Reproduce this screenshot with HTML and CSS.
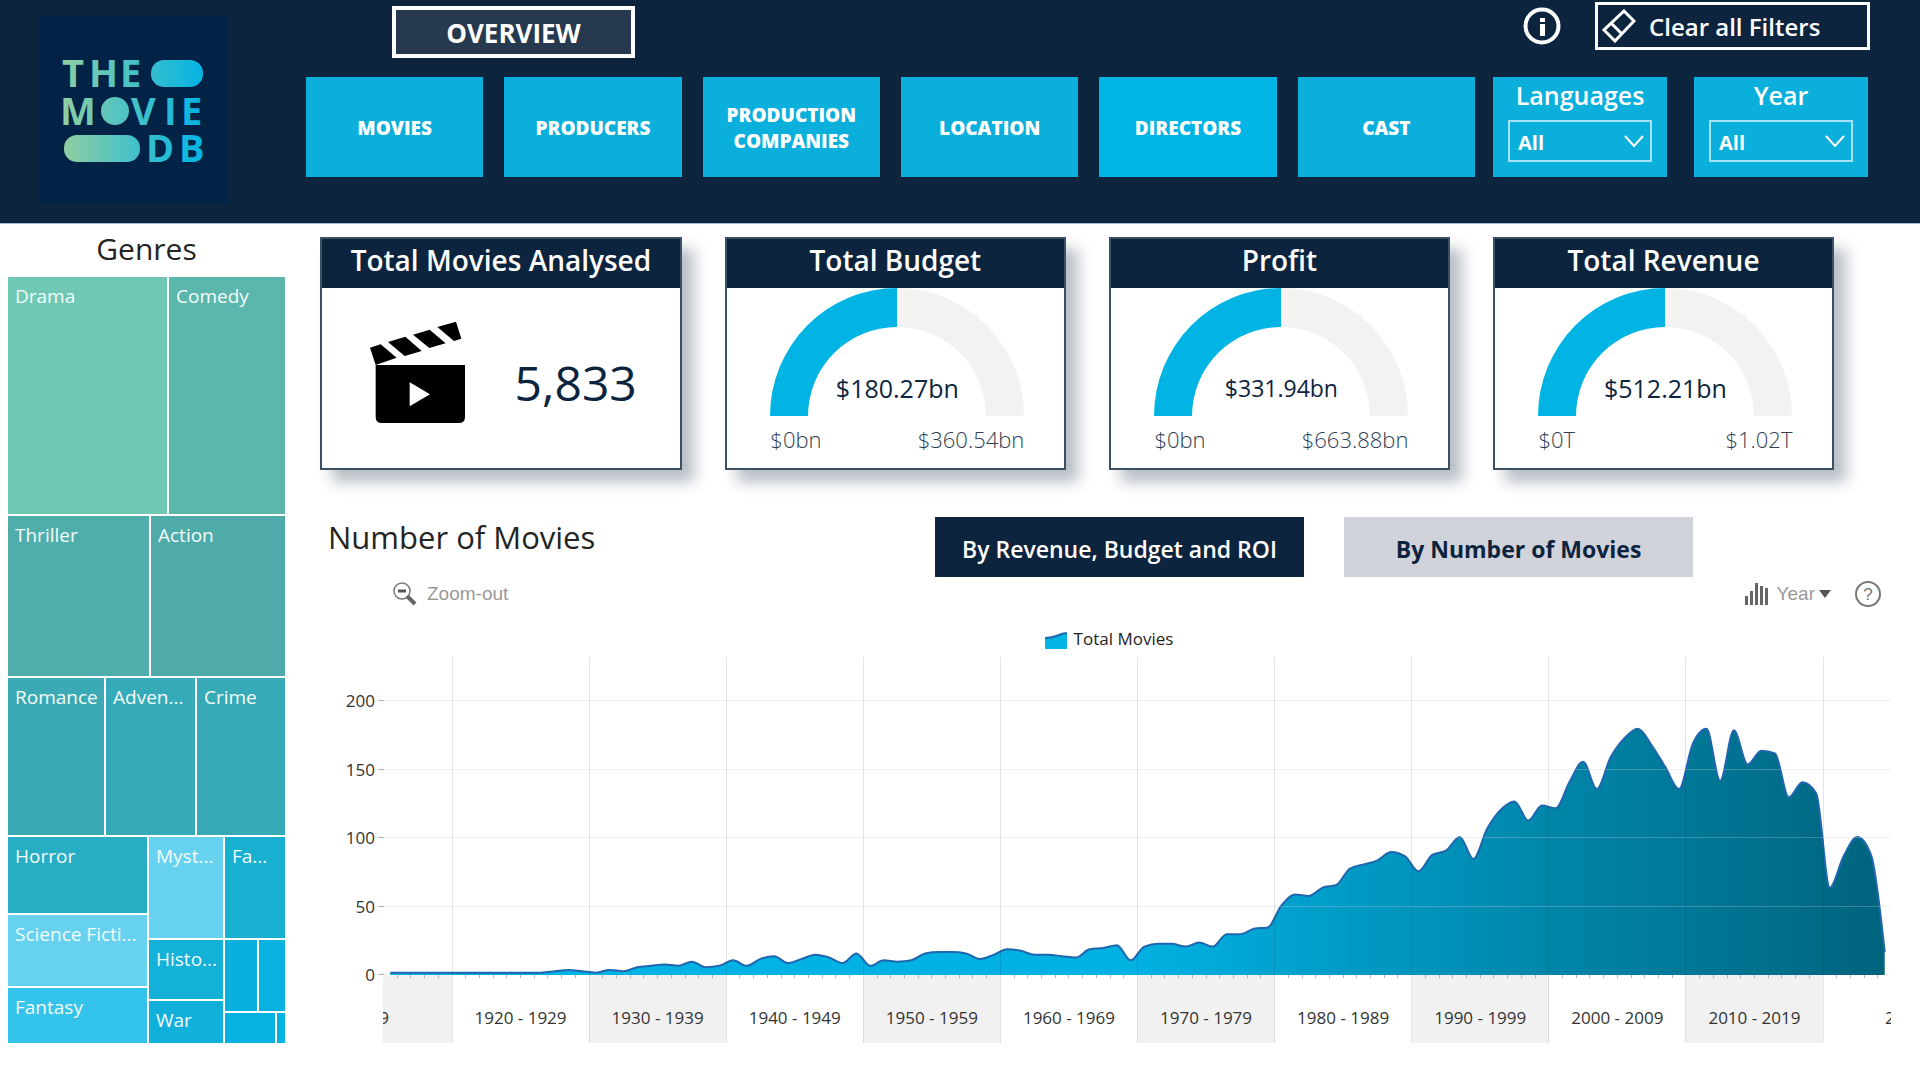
FILE: index.html
```html
<!DOCTYPE html>
<html lang="en">
<head>
<meta charset="utf-8">
<meta name="viewport" content="width=device-width, initial-scale=1">
<title>The Movie DB - Overview</title>
<link rel="stylesheet" href="styles.css">
</head>
<body>
<header class="header">
  <svg class="logo" viewBox="39 16 189 188" role="img" aria-label="The Movie DB">
    <defs>
      <linearGradient id="logo-fill" gradientUnits="userSpaceOnUse" x1="62" y1="0" x2="203" y2="0">
        <stop offset="0" stop-color="#90cea1"/>
        <stop offset="0.55" stop-color="#3fc0cb"/>
        <stop offset="1" stop-color="#04b4e4"/>
      </linearGradient>
    </defs>
    <rect x="39" y="16" width="189" height="188" fill="#022346"/>
    <g fill="url(#logo-fill)">
      <text class="logo-text"><tspan x="62 89 120" y="87">THE</tspan><tspan x="60 131 164 181" y="125">MVIE</tspan><tspan x="146 179" y="162">DB</tspan></text>
      <rect x="151" y="60" width="52" height="27" rx="13"/>
      <ellipse cx="115" cy="111" rx="14" ry="14"/>
      <rect x="64" y="135" width="76" height="27" rx="13"/>
    </g>
  </svg>
  <div class="header-main">
    <div class="header-top">
      <button class="page-title" type="button">OVERVIEW</button>
      <button class="info" type="button" aria-label="Information">
        <svg viewBox="0 0 38 38" width="38" height="38"><circle cx="19" cy="19" r="16.5" fill="none" stroke="#fff" stroke-width="4"/><path d="M17 11h5v4h-5zM17 17h5v12h-5z" fill="#fff"/></svg>
      </button>
      <button class="clear" type="button">
        <svg viewBox="0 0 34 34" width="34" height="34" fill="none" stroke="#fff" stroke-width="3"><path d="M22 2 32 12 13 32 2 21ZM9 14 20 25"/></svg>
        Clear all Filters
      </button>
    </div>
    <div class="header-row">
      <nav class="nav">
        <button type="button">MOVIES</button>
        <button type="button">PRODUCERS</button>
        <button type="button">PRODUCTION COMPANIES</button>
        <button type="button">LOCATION</button>
        <button class="hovered" type="button">DIRECTORS</button>
        <button type="button">CAST</button>
      </nav>
      <div class="filter">
        <label for="languages">Languages</label>
        <div class="select-box">
          <select id="languages"><option>All</option></select>
          <svg viewBox="0 0 20 12" width="20" height="12"><path d="M1 1 10 11 19 1" fill="none" stroke="#fff" stroke-width="2"/></svg>
        </div>
      </div>
      <div class="filter">
        <label for="year">Year</label>
        <div class="select-box">
          <select id="year"><option>All</option></select>
          <svg viewBox="0 0 20 12" width="20" height="12"><path d="M1 1 10 11 19 1" fill="none" stroke="#fff" stroke-width="2"/></svg>
        </div>
      </div>
    </div>
  </div>
</header>

<main class="main">
  <section class="genres">
    <h2 class="genres-title">Genres</h2>
    <div class="treemap">
      <div class="band band-1">
        <div class="cell drama">Drama</div>
        <div class="cell comedy">Comedy</div>
      </div>
      <div class="band band-2">
        <div class="cell thriller">Thriller</div>
        <div class="cell action">Action</div>
      </div>
      <div class="band band-3">
        <div class="cell romance">Romance</div>
        <div class="cell adventure">Adven...</div>
        <div class="cell crime">Crime</div>
      </div>
      <div class="band band-4">
        <div class="stack stack-1">
          <div class="cell horror">Horror</div>
          <div class="cell scifi">Science Ficti...</div>
          <div class="cell fantasy">Fantasy</div>
        </div>
        <div class="stack stack-2">
          <div class="cell mystery">Myst...</div>
          <div class="cell history">Histo...</div>
          <div class="cell war">War</div>
        </div>
        <div class="stack stack-3">
          <div class="cell family">Fa...</div>
          <div class="band minor-1">
            <div class="cell music"></div>
            <div class="cell animation"></div>
          </div>
          <div class="band minor-2">
            <div class="cell western"></div>
            <div class="cell other"></div>
          </div>
        </div>
      </div>
    </div>
  </section>

  <div class="content">
    <section class="cards">
      <article class="card card-wide">
        <h2>Total Movies Analysed</h2>
        <div class="count">
          <svg viewBox="208 300 291 312" width="97" height="104">
            <path d="M211 383 243 373 291 413 228 435ZM265 366 317 350 366 393 315 408ZM340 344 390 329 438 370 389 384ZM413 321 469 305 485 356 463 363Z"/>
            <path fill-rule="evenodd" d="M228 435H496V590Q496 609 477 609H247Q228 609 228 590ZM330 487V559L391 523Z"/>
          </svg>
          <span>5,833</span>
        </div>
      </article>
      <article class="card">
        <h2>Total Budget</h2>
        <div class="gauge">
          <svg viewBox="0 0 254 128" width="254" height="128"><path d="M0 128A127 128 0 0 1 127 0V39A89 89 0 0 0 38 128Z" fill="#01b4e4"/><path d="M254 128A127 128 0 0 0 127 0V39A89 89 0 0 1 216 128Z" fill="#f3f2f1"/></svg>
          <strong>$180.27bn</strong>
          <div class="range"><span>$0bn</span><span>$360.54bn</span></div>
        </div>
      </article>
      <article class="card">
        <h2>Profit</h2>
        <div class="gauge">
          <svg viewBox="0 0 254 128" width="254" height="128"><path d="M0 128A127 128 0 0 1 127 0V39A89 89 0 0 0 38 128Z" fill="#01b4e4"/><path d="M254 128A127 128 0 0 0 127 0V39A89 89 0 0 1 216 128Z" fill="#f3f2f1"/></svg>
          <strong class="small">$331.94bn</strong>
          <div class="range"><span>$0bn</span><span>$663.88bn</span></div>
        </div>
      </article>
      <article class="card">
        <h2>Total Revenue</h2>
        <div class="gauge">
          <svg viewBox="0 0 254 128" width="254" height="128"><path d="M0 128A127 128 0 0 1 127 0V39A89 89 0 0 0 38 128Z" fill="#01b4e4"/><path d="M254 128A127 128 0 0 0 127 0V39A89 89 0 0 1 216 128Z" fill="#f3f2f1"/></svg>
          <strong>$512.21bn</strong>
          <div class="range"><span>$0T</span><span>$1.02T</span></div>
        </div>
      </article>
    </section>

    <section class="trend">
      <div class="trend-head">
        <h2>Number of Movies</h2>
        <div class="tabs">
          <button class="tab tab-dark" type="button">By Revenue, Budget and ROI</button>
          <button class="tab" type="button">By Number of Movies</button>
        </div>
      </div>
      <div class="tools">
        <button class="tool zoom" type="button">
          <svg viewBox="0 0 24 24" width="24" height="24"><circle cx="9" cy="9" r="8" fill="none" stroke="#777" stroke-width="1.5"/><path d="M5 9h8" stroke="#555" stroke-width="3"/><path d="m14 14 8 8" stroke="#666" stroke-width="4"/></svg>
          Zoom-out
        </button>
        <button class="tool level" type="button">
          <svg viewBox="0 0 24 22" width="24" height="22" fill="#666"><path d="M0 13h3v9H0zM5 8h3v14H5zM10 0h3v22h-3zM15 3h3v19h-3zM20 5h3v17h-3z"/></svg>
          Year
          <svg viewBox="0 0 12 8" width="12" height="8" fill="#555"><path d="M0 0h12L6 8z"/></svg>
        </button>
        <button class="tool" type="button" aria-label="Help">
          <svg viewBox="0 0 26 26" width="26" height="26"><circle cx="13" cy="13" r="12" fill="none" stroke="#777" stroke-width="2"/><text class="help-mark" x="13" y="19" text-anchor="middle">?</text></svg>
        </button>
      </div>
      <div class="legend">
        <svg viewBox="0 0 22 17" width="22" height="17"><path d="M0 6C12 6 12 2 22 1V17H0Z" fill="#01b4e4"/><path d="M0 6C12 6 12 2 22 1" fill="none" stroke="#2066ae" stroke-width="2"/></svg>
        Total Movies
      </div>
      <svg class="chart" id="chart" viewBox="340 656 1552 388" role="img" aria-label="Total movies by year">
        <defs>
          <linearGradient id="area-fill" x1="0" y1="0" x2="1" y2="0">
            <stop offset="0" stop-color="#00b4e6"/>
            <stop offset="0.5" stop-color="#00b1e2"/>
            <stop offset="1" stop-color="#00637d"/>
          </linearGradient>
          <clipPath id="plot"><rect x="383" y="656" width="1508" height="388"/></clipPath>
        </defs>
      </svg>
    </section>
  </div>
</main>
<script src="chart.js" type="text/javascript"></script>
</body>
</html>
```
FILE: styles.css
```css
* { box-sizing: border-box; }

body {
  margin: 0;
  background: #fff;
  color: #252423;
  font-family: "Open Sans", "Noto Sans", sans-serif;
}

h2 { margin: 0; font-weight: 500; }

button, select { font-family: inherit; border: 0; border-radius: 0; margin: 0; }
svg { display: block; flex: none; }

/* Header */
.header {
  display: flex;
  gap: 78px;
  padding: 0 52px 19px 39px;
  background: #0d243e;
  border-bottom: 1px solid #a9b7c6;
}
.logo { width: 189px; height: 188px; margin-top: 16px; }
.logo-text { font-size: 38px; font-weight: 700; }
.header-main { flex: 1; min-width: 0; }
.header-top { display: flex; align-items: flex-start; height: 77px; padding-left: 86px; }
.page-title {
  width: 243px;
  height: 52px;
  margin-top: 6px;
  padding: 2px 0 0;
  border: 4px solid #fff;
  background: #26394f;
  color: #fff;
  font-size: 26px;
  font-weight: 700;
}
.info { margin: 7px 34px 0 auto; padding: 0; background: none; }
.clear {
  display: flex;
  align-items: center;
  gap: 13px;
  width: 275px;
  height: 48px;
  margin: 2px -2px 0 0;
  padding: 0 4px;
  border: 3px solid #fff;
  background: transparent;
  color: #fff;
  font-size: 24px;
  font-weight: 600;
}
.header-row { display: flex; height: 100px; }
.nav {
  flex: 1;
  display: grid;
  grid-template-columns: repeat(6, 1fr);
  gap: 21px;
  margin-right: 18px;
}
.nav button {
  padding: 2px 16px 0;
  background: #0aafdc;
  color: #fff;
  font-size: 19px;
  line-height: 26px;
  font-weight: 800;
}
.nav .hovered { background: #01b4e6; }
.filter { width: 174px; padding: 0 15px; background: #0aafdc; color: #fff; text-align: center; }
.filter + .filter { margin-left: 27px; }
.filter label { display: block; height: 43px; font-size: 25px; line-height: 36px; font-weight: 600; }
.select-box { display: grid; align-items: center; }
.select-box > * { grid-area: 1 / 1; }
.select-box svg { justify-self: end; margin-right: 8px; pointer-events: none; }
.select-box select {
  width: 100%;
  height: 42px;
  padding: 2px 8px 0;
  border: 2px solid #a6e3f5;
  background: transparent;
  color: #fff;
  font-size: 20px;
  font-weight: 700;
  appearance: none;
}

/* Page body */
.main { display: flex; gap: 35px; }
.genres { width: 285px; padding-left: 8px; }
.genres-title { height: 53px; font-size: 30px; line-height: 49px; text-align: center; }

/* Treemap */
.treemap { display: flex; flex-direction: column; gap: 2px; height: 766px; }
.band, .stack { display: flex; gap: 2px; min-height: 0; min-width: 0; }
.stack { flex-direction: column; }
.cell {
  flex: 1 1 0;
  min-width: 0;
  min-height: 0;
  overflow: hidden;
  color: #f4fdfb;
  font-size: 19px;
  line-height: 39px;
  text-indent: 7px;
  white-space: nowrap;
}
.band-1 { flex: 237 0 0; }
.band-2 { flex: 160 0 0; }
.band-3 { flex: 157 0 0; }
.band-4 { flex: 206 0 0; }
.drama { flex-grow: 159; background: #6ec8b3; }
.comedy { flex-grow: 116; background: #5bb6ab; }
.thriller { flex-grow: 141; background: #4faeab; }
.action { flex-grow: 134; background: #4fabaa; }
.romance { flex-grow: 96; background: #3caab5; }
.adventure { flex-grow: 89; background: #35aab8; }
.crime { flex-grow: 88; background: #36aab7; }
.stack-1 { flex: 139 0 0; }
.stack-2 { flex: 74 0 0; }
.stack-3 { flex: 60 0 0; }
.horror { flex-grow: 76; background: #28aec4; }
.scifi { flex-grow: 71; background: #67d2f0; }
.fantasy { flex-grow: 55; background: #34c3ea; }
.mystery { flex-grow: 101; background: #67d2f0; }
.history { flex-grow: 60; background: #13b0d7; }
.war { flex-grow: 42; background: #10b0da; }
.family { flex-grow: 101; background: #18b0d1; }
.minor-1 { flex: 72 0 0; }
.minor-2 { flex: 30 0 0; }
.music { flex-grow: 32; background: #0ab0dd; }
.animation { flex-grow: 26; background: #08b1df; }
.western { flex-grow: 50; background: #06b2e2; }
.other { flex-grow: 8; background: #04b3e3; }

/* Cards */
.content { flex: 1; min-width: 0; }
.cards { display: flex; gap: 43px; margin: 13px 86px 0 0; }
.card {
  flex: 341 0 0;
  height: 233px;
  border: 2px solid #3b4f65;
  background: #fff;
  box-shadow: 12px 12px 14px rgba(13, 36, 62, 0.3);
}
.card-wide { flex-grow: 362; }
.card h2 {
  height: 49px;
  background: #0d243e;
  color: #fff;
  font-size: 28px;
  line-height: 42px;
  font-weight: 600;
  text-align: center;
}
.count { display: flex; justify-content: space-between; padding: 32px 43px 0 47px; color: #0d243e; }
.count span { font-size: 48px; line-height: 60px; font-weight: 500; padding-top: 33px; }
.count svg { fill: #000; }
.gauge { display: grid; grid-template-columns: 254px; justify-content: center; padding-left: 4px; color: #0d243e; }
.gauge svg, .gauge strong { grid-area: 1 / 1; }
.gauge strong { align-self: end; margin-bottom: 10px; text-align: center; font-size: 25px; line-height: 36px; font-weight: 500; }
.gauge .small { font-size: 23px; }
.range { display: flex; justify-content: space-between; color: #2e3e54; font-size: 22px; line-height: 32px; font-weight: 300; padding-top: 7px; }

/* Trend */
.trend { margin-top: 47px; }
.trend-head { display: flex; justify-content: space-between; padding: 0 227px 0 8px; }
.trend-head h2 { font-size: 31px; line-height: 40px; }
.tabs { display: flex; gap: 40px; }
.tab { width: 349px; height: 60px; padding: 4px 0 0; background: #d0d3da; color: #0d243e; font-size: 23px; font-weight: 700; white-space: nowrap; }
.tab-dark { width: 369px; background: #0d243e; color: #fff; font-weight: 600; }
.tools { display: flex; align-items: center; height: 34px; padding: 0 39px 0 73px; }
.tool { display: flex; align-items: center; padding: 0; background: none; color: #999; font-family: "Liberation Sans", sans-serif; font-size: 19px; }
.zoom { gap: 10px; }
.level { gap: 8px; margin: 0 24px 0 auto; }
.level svg + svg { margin-left: -4px; }
.help-mark { fill: #777; font-size: 17px; }
.legend { display: flex; justify-content: center; align-items: center; gap: 7px; height: 45px; padding: 10px 22px 0 0; font-size: 17px; }
.legend svg { margin-top: 3px; }
.chart { width: calc(100% - 48px); height: auto; margin-left: 20px; }

.shade { fill: #f1f1f1; }
.tick { stroke: #b5b5b5; }
.grid-x { stroke: rgba(0, 0, 0, 0.1); }
.grid-y { stroke: rgba(200, 205, 205, 0.3); }
.curve { fill: none; stroke: #2066ae; stroke-width: 2; }
.axis-label { fill: #333; font-size: 17px; }
```
FILE: chart.js
```js
// Total movies per year, 1915 to 2024
const counts = [
  1, 1, 1, 1, 1, 1, 1, 1, 1, 1, 1, 1, 2, 3, 2,
  1, 3, 2, 5, 6, 7, 6, 9, 5, 6,
  10, 6, 11, 13, 8, 11, 14, 12, 8, 15,
  6, 10, 9, 10, 15, 16, 16, 15, 11, 14,
  18, 17, 14, 14, 13, 12, 18, 19, 21, 10,
  20, 22, 22, 20, 23, 20, 29, 29, 33, 34,
  50, 58, 57, 63, 65, 77, 80, 83, 89, 86,
  75, 87, 90, 100, 84, 106, 120, 126, 112, 123,
  121, 140, 155, 135, 158, 172, 179, 167, 151, 135,
  168, 179, 141, 178, 153, 163, 161, 129, 140, 132,
  63, 86, 100, 87, 16
];

const firstYear = 1915;
const plotArea = { left: 383, right: 1891, top: 657, base: 974, bottom: 1043 };
const firstDecadeX = 452;
const step = (1823 - firstDecadeX) / 100;
const unit = 1.37;
const chart = document.getElementById("chart");

function add(name, attrs, text, parent = chart) {
  const el = document.createElementNS("http://www.w3.org/2000/svg", name);
  for (const key in attrs) el.setAttribute(key, attrs[key]);
  if (text) el.textContent = text;
  parent.appendChild(el);
  return el;
}

const yearX = year => firstDecadeX + (year - 1920) * step;
const points = counts.map((n, i) => [yearX(firstYear + i + 0.5), plotArea.base - n * unit]);

// Monotone cubic interpolation
function curve(p) {
  const n = p.length;
  const slope = [];
  for (let i = 0; i < n - 1; i++) slope.push((p[i + 1][1] - p[i][1]) / (p[i + 1][0] - p[i][0]));
  const m = [slope[0]];
  for (let i = 1; i < n - 1; i++) {
    const a = slope[i - 1], b = slope[i];
    m.push(a * b <= 0 ? 0 : Math.sign(a) * Math.min(Math.abs(a), Math.abs(b), Math.abs(a + b) / 4) * 2);
  }
  m.push(slope[n - 2] * 1.3);
  let d = `M${p[0]}`;
  for (let i = 0; i < n - 1; i++) {
    const h = (p[i + 1][0] - p[i][0]) / 3;
    d += `C${p[i][0] + h},${p[i][1] + m[i] * h} ${p[i + 1][0] - h},${p[i + 1][1] - m[i + 1] * h} ${p[i + 1]}`;
  }
  return d;
}

function draw({ left, right, top, base, bottom }) {
  const plot = add("g", { "clip-path": "url(#plot)" });
  for (let d = 1910; d <= 2020; d += 10) {
    const x = Math.max(left, yearX(d));
    const end = Math.min(right, yearX(d + 10));
    if (d % 20 === 10) add("rect", { class: "shade", x, y: base, width: end - x, height: bottom - base }, "", plot);
    // The outermost decades run past the plot, so only one digit of each shows
    if (d === 1910) add("text", { class: "axis-label", x: 389, y: 1024, "text-anchor": "end" }, "9", plot);
    else if (d === 2020) add("text", { class: "axis-label", x: 1885, y: 1024 }, "2", plot);
    else add("text", { class: "axis-label", x: yearX(d + 5), y: 1024, "text-anchor": "middle" }, `${d} - ${d + 9}`, plot);
  }

  const line = curve(points);
  add("path", { d: `${line}V${base + 1}H${points[0][0]}Z`, fill: "url(#area-fill)" });
  add("path", { d: line, class: "curve" });

  for (let v = 0; v <= 200; v += 50) {
    const y = Math.round(base - v * unit) + 0.5;
    if (v) add("line", { class: "grid-y", x1: left, x2: right, y1: y, y2: y });
    add("line", { class: "tick", x1: 378, x2: 384, y1: y, y2: y });
    add("text", { class: "axis-label", x: 375, y: y + 6, "text-anchor": "end" }, String(v));
  }
  for (let year = firstYear + 1; year <= 2024; year++) {
    const x = Math.floor(yearX(year)) + 0.5;
    if (year % 10) add("line", { class: "tick", x1: x, x2: x, y1: base + 1, y2: base + 4 });
    else add("line", { class: "grid-x", x1: x, x2: x, y1: top, y2: bottom });
  }
}

draw(plotArea);
```
